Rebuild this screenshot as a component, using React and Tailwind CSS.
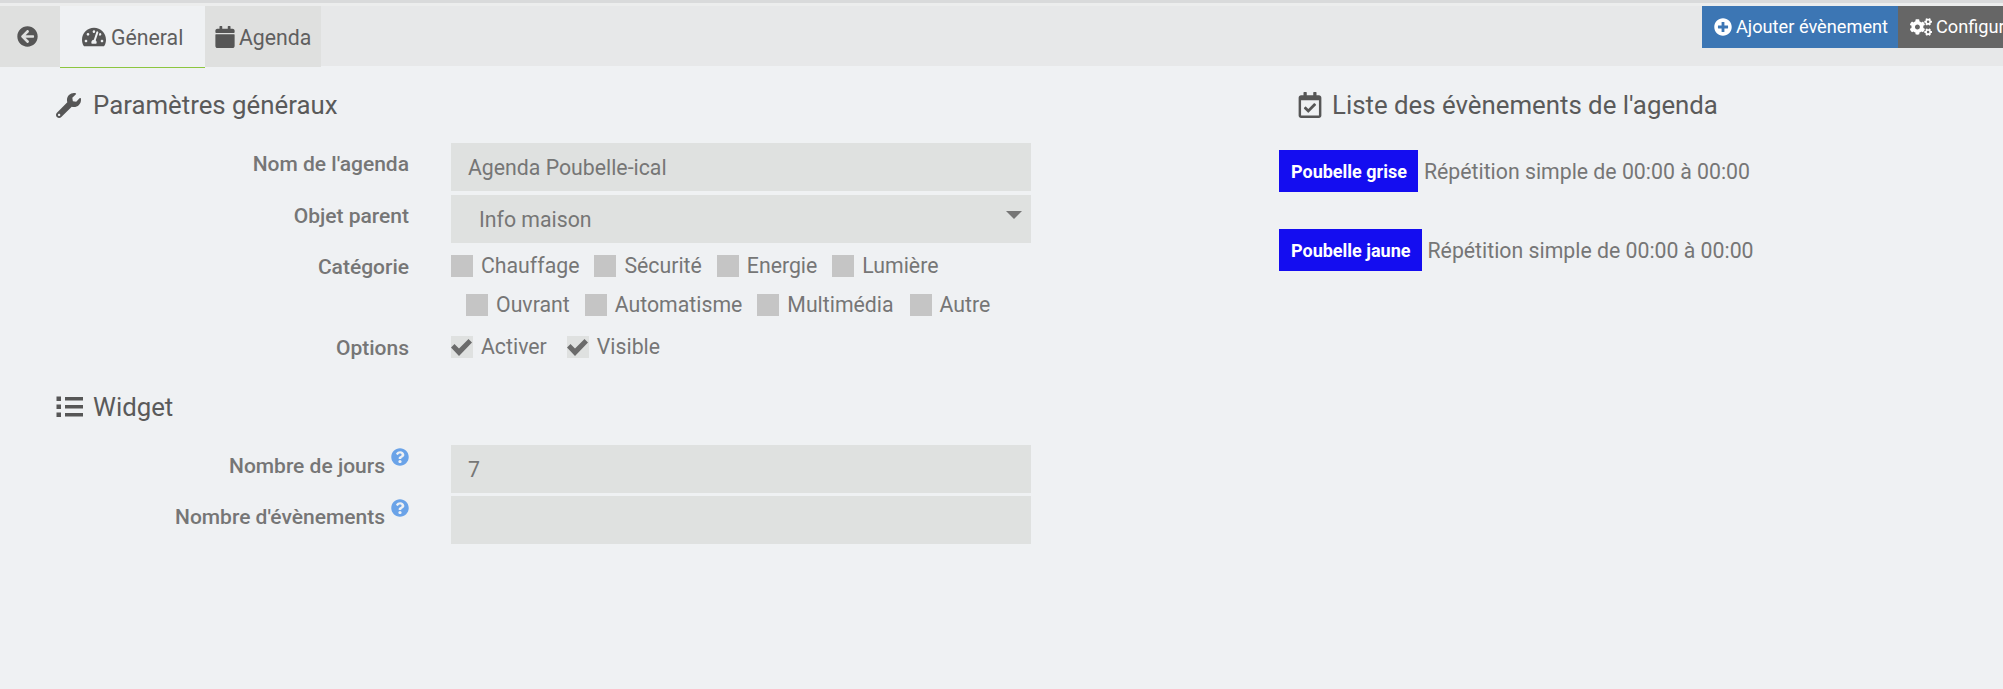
import React from "react";
import { FaArrowCircleLeft, FaTachometerAlt, FaCalendar, FaPlusCircle, FaCogs, FaWrench, FaRegCalendarCheck, FaQuestionCircle } from "react-icons/fa";

function Label({ children, help, className = "" }) {
  return (
    <div className={`w-[353px] shrink-0 flex justify-end text-[21px] font-medium text-[#767676] leading-[28px] ${className}`}>
      <span className="whitespace-nowrap">{children}</span>
      {help && <FaQuestionCircle className="ml-[6px] mt-[-4px] text-[#6aa3e8] text-[18px] shrink-0" />}
    </div>
  );
}

function Field({ children, className = "" }) {
  return (
    <div className={`w-[580px] h-[48px] ml-[42px] pt-[2px] bg-[#dfe1e0] flex items-center text-[21.28px] text-[#767676] ${className}`}>
      {children}
    </div>
  );
}

function Check({ label, checked, className = "" }) {
  return (
    <div className={`flex items-center text-[21.28px] leading-[22px] text-[#767676] ${className}`}>
      <span className={`relative w-[22px] h-[22px] shrink-0 ${checked ? "bg-[#dfe1e0]" : "bg-[#c5c5c5]"}`}>
        {checked && (
          <svg viewBox="0 0 22 22" className="absolute inset-0 w-[22px] h-[22px]">
            <path d="M0 11.5 L3.5 8 L8 12.5 L17.5 3 L21 6.5 L8 20 Z" fill="#6b6b6b" />
          </svg>
        )}
      </span>
      <span className="ml-[8px] whitespace-nowrap">{label}</span>
    </div>
  );
}

function Title({ icon, children, className = "" }) {
  return (
    <div className={`flex items-center h-[32px] text-[#5a5a5a] text-[25.8px] ${className}`}>
      {icon}
      <span className="whitespace-nowrap">{children}</span>
    </div>
  );
}

function Event({ name }) {
  return (
    <div className="flex items-center h-[42px]">
      <span className="h-[42px] pl-[12px] pr-[11px] bg-[#140df0] text-white text-[18px] font-bold flex items-center whitespace-nowrap">{name}</span>
      <span className="ml-[6px] pt-[2px] text-[21.28px] text-[#767676] whitespace-nowrap">Répétition simple de 00:00 à 00:00</span>
    </div>
  );
}

export default function App() {
  return (
    <div className="w-[2003px] h-[689px] overflow-hidden bg-[#eff1f3] font-['Roboto',sans-serif]">
      <div className="h-[3px] bg-[#d9dadb]"></div>
      <div className="h-[3px] bg-[#eceded]"></div>
      <div className="h-[60px] bg-[#e7e8e9] flex relative">
        <div className="w-[60px] h-[61px] bg-[#dfe0df] flex items-center pl-[17px]">
          <FaArrowCircleLeft className="text-[21px] text-[#565656]" />
        </div>
        <div className="w-[145px] h-[62px] pt-[3px] bg-[#eff1f3] border-b border-[#8cc63f] flex items-center pl-[22px] text-[#5f5f5f] text-[21.28px]">
          <FaTachometerAlt className="text-[24px] text-[#565656] mr-[5px] -mt-[2px]" />
          Géneral
        </div>
        <div className="w-[116px] h-[61px] pt-[3px] bg-[#dfe0df] flex items-center pl-[9px] text-[#5f5f5f] text-[21.28px]">
          <FaCalendar className="text-[22px] text-[#565656] mr-[3px] -mt-[2px]" />
          Agenda
        </div>
        <div className="ml-auto flex h-[42px] text-white text-[18.2px]">
          <div className="w-[196px] bg-[#3c76b4] flex items-center pl-[12px] whitespace-nowrap">
            <FaPlusCircle className="text-[18px] mr-[4px] shrink-0" />
            Ajouter évènement
          </div>
          <div className="w-[105px] bg-[#666666] flex items-center pl-[12px] whitespace-nowrap overflow-hidden">
            <FaCogs className="text-[22px] mr-[4px] shrink-0" />
            Configuration
          </div>
        </div>
      </div>
      <div className="flex">
        <div className="w-[1279px] shrink-0 pl-[56px] pt-[23px]">
          <Title icon={<FaWrench className="text-[25px] mr-[12px] text-[#565656]" />}>Paramètres généraux</Title>
          <div className="mt-[22px] flex flex-col gap-[4px]">
            <div className="flex">
              <Label className="pt-[7px]">Nom de l'agenda</Label>
              <Field className="pl-[17px]">Agenda Poubelle-ical</Field>
            </div>
            <div className="flex">
              <Label className="pt-[7px]">Objet parent</Label>
              <Field className="pl-[28px] relative">
                Info maison
                <span className="absolute right-[9px] top-[16px] border-x-[8px] border-x-transparent border-t-[8px] border-t-[#767676]"></span>
              </Field>
            </div>
          </div>
          <div className="flex mt-[12px]">
            <Label className="h-[22px] items-center pt-[2px]">Catégorie</Label>
            <div className="ml-[42px]">
              <div className="flex">
                <Check label="Chauffage" />
                <Check label="Sécurité" className="ml-[15px]" />
                <Check label="Energie" className="ml-[15px]" />
                <Check label="Lumière" className="ml-[15px]" />
              </div>
              <div className="flex mt-[17px] ml-[15px]">
                <Check label="Ouvrant" />
                <Check label="Automatisme" className="ml-[15px]" />
                <Check label="Multimédia" className="ml-[15px]" />
                <Check label="Autre" className="ml-[16px]" />
              </div>
            </div>
          </div>
          <div className="flex mt-[20px]">
            <Label className="h-[22px] items-center pt-[2px]">Options</Label>
            <div className="ml-[42px] flex">
              <Check label="Activer" checked />
              <Check label="Visible" checked className="ml-[20px]" />
            </div>
          </div>
          <Title
            className="mt-[33px]"
            icon={
              <svg viewBox="0 0 27 22" className="w-[27px] h-[22px] mr-[10px] text-[#565656]" fill="currentColor">
                <rect x="0.5" y="0.5" width="4.5" height="4.5" />
                <rect x="9" y="1" width="18" height="3.5" />
                <rect x="0.5" y="8.5" width="4.5" height="4.5" />
                <rect x="9" y="9" width="18" height="3.5" />
                <rect x="0.5" y="16.5" width="4.5" height="4.5" />
                <rect x="9" y="17" width="18" height="3.5" />
              </svg>
            }
          >
            Widget
          </Title>
          <div className="mt-[22px] flex flex-col gap-[3px]">
            <div className="flex">
              <Label help className="pt-[7px]">Nombre de jours</Label>
              <Field className="pl-[17px]">7</Field>
            </div>
            <div className="flex">
              <Label help className="pt-[7px]">Nombre d'évènements</Label>
              <Field></Field>
            </div>
          </div>
        </div>
        <div className="flex-1 pt-[23px]">
          <Title className="pl-[18px]" icon={<FaRegCalendarCheck className="text-[26px] mr-[9px] text-[#565656]" />}>Liste des évènements de l'agenda</Title>
          <div className="mt-[29px] flex flex-col gap-[37px]">
            <Event name="Poubelle grise" />
            <Event name="Poubelle jaune" />
          </div>
        </div>
      </div>
    </div>
  );
}
